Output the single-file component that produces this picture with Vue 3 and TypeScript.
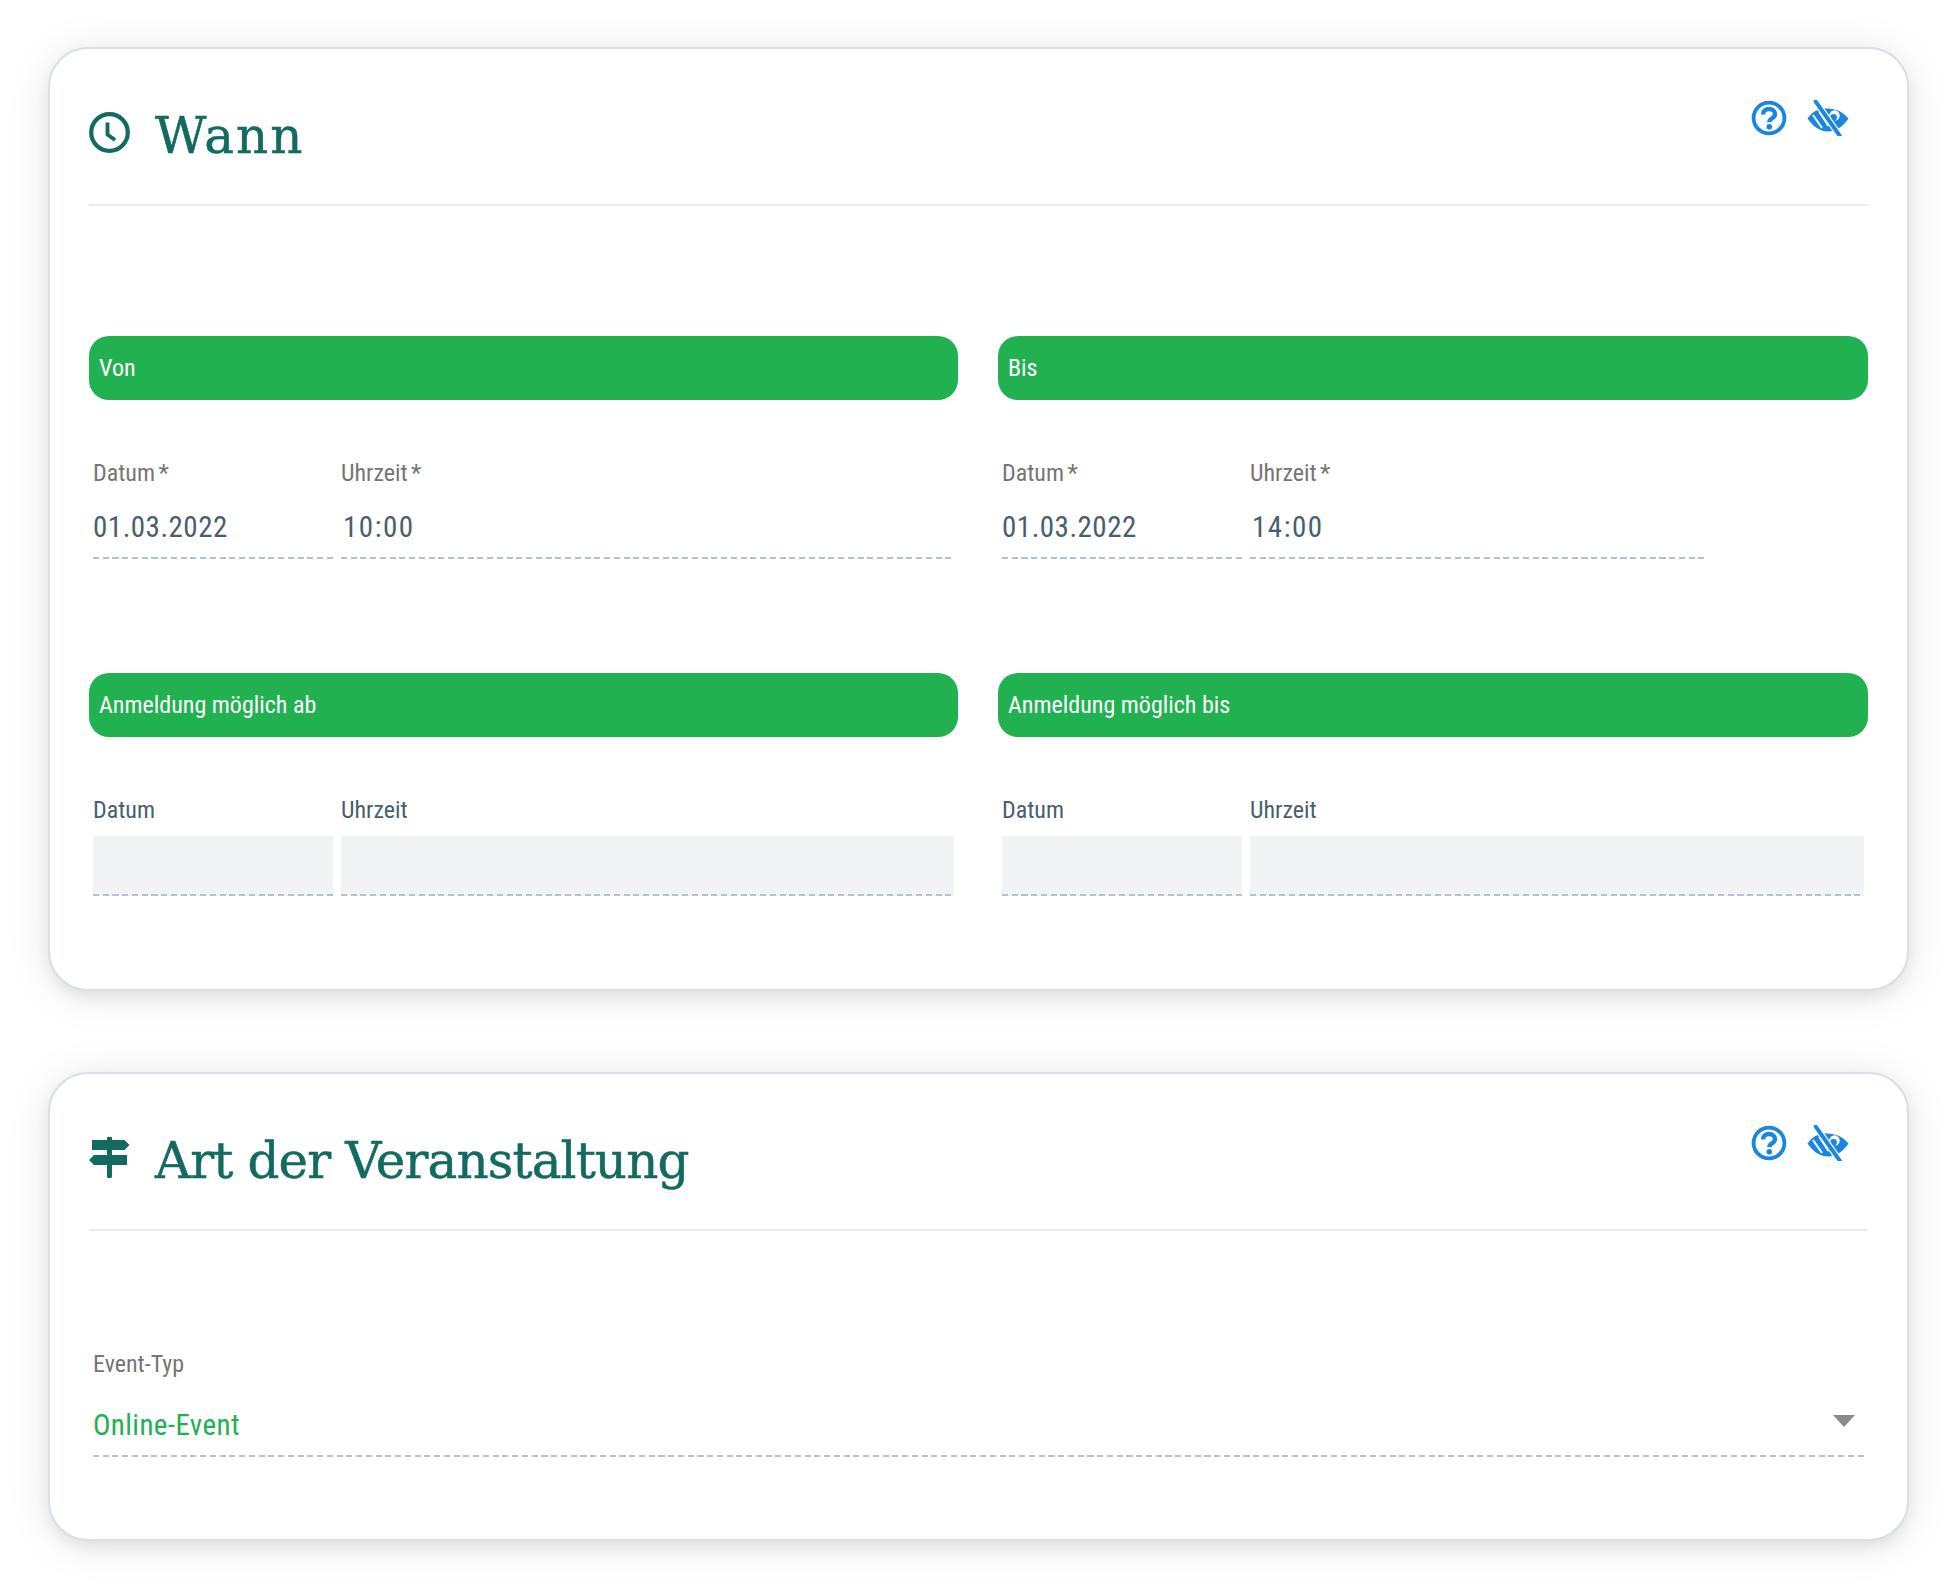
<script setup lang="ts">
interface Field { label: string; value?: string; disabled?: boolean }
interface Column { title: string; date: Field; time: Field; narrow?: boolean }

const rows: Column[][] = [
  [
    { title: 'Von', date: { label: 'Datum *', value: '01.03.2022' }, time: { label: 'Uhrzeit *', value: '10:00' } },
    { title: 'Bis', date: { label: 'Datum *', value: '01.03.2022' }, time: { label: 'Uhrzeit *', value: '14:00' }, narrow: true },
  ],
  [
    { title: 'Anmeldung möglich ab', date: { label: 'Datum', disabled: true }, time: { label: 'Uhrzeit', disabled: true } },
    { title: 'Anmeldung möglich bis', date: { label: 'Datum', disabled: true }, time: { label: 'Uhrzeit', disabled: true } },
  ],
]
</script>

<template>
  <main class="page">
    <section class="card card-when">
      <header class="head">
        <div class="heading">
          <svg class="head-icon" viewBox="0 0 41 41" aria-hidden="true">
            <circle cx="20.5" cy="20.500" r="18.300" fill="none" stroke="currentColor" stroke-width="4.200" />
            <path d="M18.500 10.500v12l7.500 5.500" fill="none" stroke="currentColor" stroke-width="3.800" />
          </svg>
          <h2 class="short">Wann</h2>
        </div>
        <div class="actions">
          <svg class="help" viewBox="0 0 36 36" aria-hidden="true">
            <circle cx="18" cy="18" r="15.400" fill="none" stroke="currentColor" stroke-width="3.800" />
            <path d="M12 14.500c0-3.500 2.600-5.500 6-5.500s6 2 6 5c0 4.500-5.700 4-5.700 8.300" fill="none" stroke="currentColor" stroke-width="4.400" />
            <circle cx="18.300" cy="26.800" r="2.800" fill="currentColor" />
          </svg>
          <svg class="eye" viewBox="0 0 42 36" aria-hidden="true">
            <path d="M0.500 18.500C6 11 11 8.500 20 8.500s16 3.500 21.500 10C36 26 30 31.500 21 31.500S6 26 0.500 18.500z" fill="currentColor" />
            <circle cx="27.500" cy="15.500" r="5.200" fill="#fff" />
            <circle cx="26.500" cy="17.500" r="3.400" fill="currentColor" />
            <path d="M6 15l9 13M12.500 12l9 14" stroke="#fff" stroke-width="2" fill="none" />
            <path d="M8.700 1.700l24 34" stroke="#fff" stroke-width="6.500" fill="none" />
            <path d="M8.700 1.700l24 34" stroke="currentColor" stroke-width="4" stroke-linecap="round" fill="none" />
          </svg>
        </div>
      </header>

      <div v-for="(row, ri) in rows" :key="ri" class="row" :class="`row-${ri}`">
        <div v-for="col in row" :key="col.title" class="col">
          <div class="bar">{{ col.title }}</div>
          <div class="fields" :class="{ narrow: col.narrow }">
            <div v-for="f in [col.date, col.time]" :key="f.label" class="field" :class="{ time: f === col.time }">
              <label :class="{ dim: !f.disabled }">{{ f.label }}</label>
              <div class="control" :class="{ disabled: f.disabled }">{{ f.value }}</div>
            </div>
          </div>
        </div>
      </div>
    </section>

    <section class="card card-type">
      <header class="head">
        <div class="heading">
          <svg class="head-icon" viewBox="0 0 41 41" aria-hidden="true">
            <path d="M18 1.300a2.500 2.500 0 0 1 5 0v1.700h12.500l5 5-5 5H23v5h15v10H23v11a2.500 2.500 0 0 1-5 0V28H5l-5-5 5-5h13v-5H3V3h15z" fill="currentColor" />
          </svg>
          <h2 class="long">Art der Veranstaltung</h2>
        </div>
        <div class="actions">
          <svg class="help" viewBox="0 0 36 36" aria-hidden="true">
            <circle cx="18" cy="18" r="15.400" fill="none" stroke="currentColor" stroke-width="3.800" />
            <path d="M12 14.500c0-3.500 2.600-5.500 6-5.500s6 2 6 5c0 4.500-5.700 4-5.700 8.300" fill="none" stroke="currentColor" stroke-width="4.400" />
            <circle cx="18.300" cy="26.800" r="2.800" fill="currentColor" />
          </svg>
          <svg class="eye" viewBox="0 0 42 36" aria-hidden="true">
            <path d="M0.500 18.500C6 11 11 8.500 20 8.500s16 3.500 21.500 10C36 26 30 31.500 21 31.500S6 26 0.500 18.500z" fill="currentColor" />
            <circle cx="27.500" cy="15.500" r="5.200" fill="#fff" />
            <circle cx="26.500" cy="17.500" r="3.400" fill="currentColor" />
            <path d="M6 15l9 13M12.500 12l9 14" stroke="#fff" stroke-width="2" fill="none" />
            <path d="M8.700 1.700l24 34" stroke="#fff" stroke-width="6.500" fill="none" />
            <path d="M8.700 1.700l24 34" stroke="currentColor" stroke-width="4" stroke-linecap="round" fill="none" />
          </svg>
        </div>
      </header>

      <div class="select-field">
        <label class="dim">Event-Typ</label>
        <div class="control select">
          <span>Online-Event</span>
          <i class="caret"></i>
        </div>
      </div>
    </section>
  </main>
</template>

<style scoped>
.page {
  display: flex;
  flex-direction: column;
  gap: 81px;
  padding: 47px 40px 53px 48px;
  font-family: "Roboto", "Liberation Sans", sans-serif;
  font-stretch: condensed;
}
.card {
  border: 2px solid #d9e0e5;
  border-radius: 40px;
  background: #fff;
  padding: 0 39px;
  box-shadow: 0 6px 14px rgba(0, 0, 0, 0.08), 0 4px 46px rgba(0, 0, 0, 0.09);
}
.card-when { height: 944px; box-sizing: border-box; }
.card-type { height: 469px; box-sizing: border-box; }
.head {
  display: flex;
  justify-content: space-between;
  height: 157px;
  border-bottom: 2px solid #e8ecef;
  box-sizing: border-box;
}
.heading {
  display: flex;
  align-items: flex-start;
  gap: 25px;
  padding-top: 58px;
  color: #136b5f;
}
.head-icon { width: 41px; height: 41px; flex: none; margin-top: 5px; }
h2 {
  margin: -1px 0 0;
  font-family: "DejaVu Serif", serif;
  font-stretch: normal;
  font-weight: 400;
  font-size: 50px;
  line-height: 60px;
  -webkit-text-stroke: 0.5px currentColor;
}
h2.short { letter-spacing: 2.1px; }
h2.long { letter-spacing: -0.9px; }
.actions {
  display: flex;
  align-items: flex-start;
  gap: 20px;
  padding: 51px 19px 0 0;
  color: #1a86e0;
}
.help { width: 36px; height: 36px; }
.eye { width: 42px; height: 36px; }
.row {
  display: grid;
  grid-template-columns: 869px 1fr;
  gap: 40px;
}
.row-0 { margin-top: 130px; }
.row-1 { margin-top: 114px; }
.bar {
  height: 64px;
  line-height: 64px;
  padding-left: 10px;
  border-radius: 20px;
  background: #21b151;
  color: #fff;
  font-size: 24px;
}
.fields {
  display: grid;
  grid-template-columns: 240px 1fr;
  gap: 8px;
  padding: 0 4px;
  margin-top: 58px;
}
.fields.narrow { padding-right: 164px; }
label {
  display: block;
  height: 30px;
  line-height: 30px;
  font-size: 24px;
  word-spacing: -2px;
  color: #48606e;
}
label.dim { color: #757575; }
.control {
  height: 60px;
  box-sizing: border-box;
  margin-top: 11px;
  line-height: 56px;
  font-size: 29px;
  letter-spacing: 0.5px;
  color: #48606e;
  background-image: repeating-linear-gradient(90deg, #b5c2cc 0 6px, transparent 6px 9.75px);
  background-size: 100% 2px;
  background-position: left bottom;
  background-repeat: no-repeat;
}
.time .control { padding-left: 2px; letter-spacing: 1.5px; }
.control.disabled { background-color: #f1f3f4; }
.select-field { margin: 118px 4px 0; }
.select {
  display: flex;
  justify-content: space-between;
  align-items: center;
  margin-top: 18px;
  letter-spacing: 0.4px;
  color: #21b151;
  padding: 0 9px 4px 0;
}
.caret {
  width: 0;
  height: 0;
  margin-bottom: 9px;
  border: 11px solid transparent;
  border-top: 12px solid #8a8a8a;
  border-bottom: 0;
}
</style>

<style>
html, body { background: #fff; }
</style>
